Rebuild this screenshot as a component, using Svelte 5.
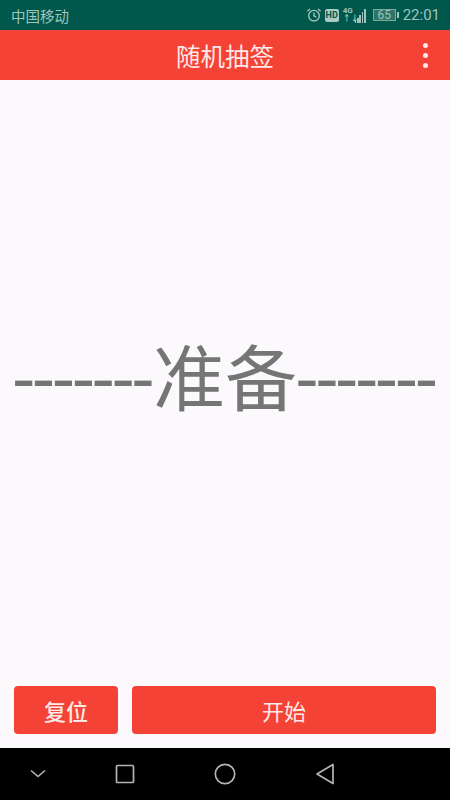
<script>
  const bars = [3, 5, 8, 11, 14];
</script>

<div class="page">
  <div class="status">
    <span class="carrier">中国移动</span>
    <div class="status-right">
      <svg class="alarm" width="16" height="16" viewBox="0 0 16 16" fill="none" stroke="#9fc4bd" stroke-width="1.4">
        <circle cx="8" cy="8.7" r="5.3" />
        <path d="M8 5.6V8.9L10.2 10.2M1.4 4.2 4 1.9M14.6 4.2 12 1.9" />
      </svg>
      <span class="hd">HD</span>
      <div class="signal">
        <div class="net"><span>4G</span><span>↑↓</span></div>
        <div class="bars">
          {#each bars as h}
            <i class="bar" style="height:{h}px"></i>
          {/each}
        </div>
      </div>
      <div class="battery"><span>65</span></div>
      <i class="tip"></i>
      <span class="time">22:01</span>
    </div>
  </div>

  <header class="appbar">
    <span class="title">随机抽签</span>
    <div class="more"><i></i><i></i><i></i></div>
  </header>

  <main class="content">
    <div class="draw">-------准备-------</div>
  </main>

  <div class="actions">
    <button class="reset">复位</button>
    <button class="start">开始</button>
  </div>

  <nav class="nav">
    <svg class="back" width="18" height="18" viewBox="0 0 18 18" fill="none" stroke="#b4b4b4" stroke-width="1.6"><path d="M2 5.5 9 11.5 16 5.5" /></svg>
    <svg width="20" height="20" viewBox="0 0 20 20" fill="none" stroke="#b4b4b4" stroke-width="1.7"><rect x="1.5" y="1.5" width="17" height="17" rx="1" /></svg>
    <svg width="22" height="22" viewBox="0 0 22 22" fill="none" stroke="#b4b4b4" stroke-width="1.7"><circle cx="11" cy="11" r="9.7" /></svg>
    <svg width="20" height="22" viewBox="0 0 20 22" fill="none" stroke="#b4b4b4" stroke-width="1.7" stroke-linejoin="round"><path d="M18 1.5V20.5L2 11Z" /></svg>
  </nav>
</div>

<style>
  :global(body) {
    margin: 0;
  }
  .page {
    width: 450px;
    height: 800px;
    display: flex;
    flex-direction: column;
    background: #fbf9fc;
    font-family: Roboto, "Noto Sans CJK SC", sans-serif;
    overflow: hidden;
  }
  .status {
    height: 30px;
    flex: none;
    box-sizing: border-box;
    padding: 0 10px 0 11px;
    background: #00574b;
    color: #9fc4bd;
    display: flex;
    align-items: center;
    justify-content: space-between;
  }
  .carrier {
    font-size: 14.5px;
  }
  .status-right {
    display: flex;
    align-items: center;
  }
  .alarm {
    margin-right: 3px;
  }
  .hd {
    width: 14px;
    height: 13px;
    margin-right: 4px;
    border-radius: 2px;
    background: #a9c9c3;
    color: #00574b;
    font-size: 9px;
    font-weight: 700;
    line-height: 13px;
    text-align: center;
  }
  .signal {
    display: flex;
    align-items: flex-end;
    gap: 2px;
    margin-right: 7px;
  }
  .net {
    display: flex;
    flex-direction: column;
    width: 10px;
    font-size: 8px;
    font-weight: 700;
    line-height: 8px;
    white-space: nowrap;
  }
  .bars {
    display: flex;
    align-items: flex-end;
    gap: 0.5px;
  }
  .bar {
    width: 1.8px;
    background: #9fc4bd;
  }
  .battery {
    width: 23px;
    height: 12px;
    box-sizing: border-box;
    border: 1px solid #7fa9a1;
    background: #2f7367;
    font-size: 12px;
    line-height: 10px;
    text-align: center;
  }
  .tip {
    width: 2px;
    height: 6px;
    margin: 0 4px 0 1px;
    background: #9fc4bd;
  }
  .time {
    font-size: 15px;
  }
  .appbar {
    position: relative;
    height: 50px;
    flex: none;
    background: #f44336;
    color: #fde9e7;
    display: flex;
    align-items: center;
    justify-content: center;
  }
  .title {
    font-size: 24.5px;
  }
  .more {
    position: absolute;
    right: 22px;
    top: 13px;
    display: flex;
    flex-direction: column;
    gap: 5px;
  }
  .more i {
    width: 5px;
    height: 5px;
    border-radius: 50%;
    background: #fde9e7;
  }
  .content {
    flex: 1;
    box-sizing: border-box;
    padding-bottom: 20px;
    display: flex;
    align-items: center;
    justify-content: center;
  }
  .draw {
    font-size: 72px;
    color: #757575;
    white-space: nowrap;
  }
  .actions {
    flex: none;
    display: flex;
    gap: 14px;
    padding: 0 14px 14px;
  }
  button {
    height: 48px;
    border: none;
    border-radius: 4px;
    padding: 0;
    background: #f44336;
    color: #fde9e7;
    font: inherit;
    font-size: 22px;
  }
  .reset {
    width: 104px;
    font-weight: 500;
  }
  .start {
    flex: 1;
  }
  .nav {
    height: 52px;
    flex: none;
    box-sizing: border-box;
    padding-left: 29px;
    background: #000;
    display: flex;
    align-items: center;
    gap: 79px;
  }
  .back {
    margin-right: -11px;
  }
</style>
